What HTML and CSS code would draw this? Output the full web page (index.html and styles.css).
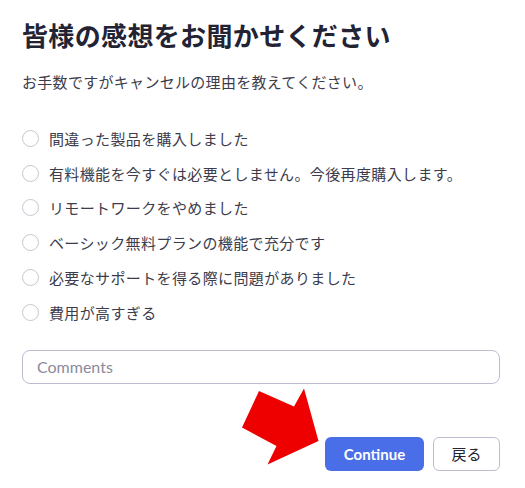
FILE: index.html
```html
<!DOCTYPE html>
<html>
	<head>
		<meta charset="utf-8">
		<title>キャンセル理由</title>
		<link rel="stylesheet" href="styles.css">
	</head>
	<body>
		<div class="survey">
			<h1>皆様の感想をお聞かせください</h1>
			<p class="lead">お手数ですがキャンセルの理由を教えてください。</p>
			<ul class="reasons">
				<li><span class="radio"></span>間違った製品を購入しました</li>
				<li><span class="radio"></span>有料機能を今すぐは必要としません。今後再度購入します。</li>
				<li><span class="radio"></span>リモートワークをやめました</li>
				<li><span class="radio"></span>ベーシック無料プランの機能で充分です</li>
				<li><span class="radio"></span>必要なサポートを得る際に問題がありました</li>
				<li><span class="radio"></span>費用が高すぎる</li>
			</ul>
			<input class="comments" type="text" placeholder="Comments">
			<div class="actions">
				<a href="javascript:void(0)" class="btn primary">Continue</a>
				<a href="javascript:void(0)" class="btn back">戻る</a>
			</div>
			<!-- 注目用の矢印 -->
			<svg class="arrow" width="90" height="90" viewBox="0 0 90 90">
				<polygon points="29,11 64,26.5 74,8.5 88.5,61 37.5,84.5 46.5,66 12,47.5" fill="#ee0000"/>
			</svg>
		</div>
	</body>
</html>
```

FILE: styles.css
```css
*{margin:0;padding:0;box-sizing:border-box;}
ul{list-style:none;}
a{text-decoration:none;}
body{background:#fff;font-family:"Noto Sans CJK JP","Noto Sans",sans-serif;color:#3c3c4c;}
div.survey{position:relative;padding:17px 25px 16px 22px;}
h1{font-size:26px;line-height:36px;font-weight:700;color:#232333;letter-spacing:0.35px;}
p.lead{margin-top:18px;font-size:15px;line-height:22px;color:#3c3c4c;letter-spacing:0.3px;}
ul.reasons{margin-top:28px;}
ul.reasons>li{display:flex;align-items:center;height:34.8px;font-size:15px;color:#3c3c4c;letter-spacing:0.37px;}
ul.reasons>li>span.radio{width:17px;height:17px;border:1px solid #c6c6d2;border-radius:50%;margin-right:10px;flex:none;}
input.comments{display:block;width:100%;height:34px;margin-top:20px;padding:0 14px;border:1px solid #bdbdd2;border-radius:8px;font-family:Lato,"Noto Sans",sans-serif;font-size:16px;color:#232333;outline:none;}
input.comments::placeholder{color:#8b8b9c;}
div.actions{display:flex;justify-content:flex-end;gap:9px;margin-top:53px;}
a.btn{display:flex;align-items:center;justify-content:center;height:34px;border-radius:6px;font-size:15px;}
a.primary{width:99px;background:#4a6ee8;color:#fff;font-family:Lato,"Noto Sans",sans-serif;font-weight:700;}
a.back{width:67px;border:1px solid #bdbdd2;color:#232333;font-family:"Noto Sans CJK JP",sans-serif;}
svg.arrow{position:absolute;left:230px;top:380px;}
```
